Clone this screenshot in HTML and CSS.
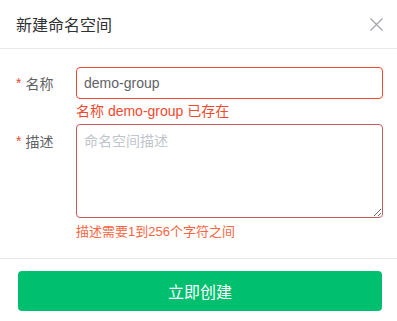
FILE: index.html
```html
<!DOCTYPE html>
<html lang="zh-CN">
<head>
    <meta charset="UTF-8">
    <title>新建命名空间</title>
    <link rel="stylesheet" href="styles.css">
</head>
<body>

<div class="dialog">
    <div class="dialog-header">
        <span class="dialog-title">新建命名空间</span>
        <button class="close-btn" aria-label="关闭">
            <svg width="13" height="13" viewBox="0 0 13 13"><path d="M0.5 0.5L12.5 12.5M12.5 0.5L0.5 12.5" stroke="#a0a3a8" stroke-width="1.2" fill="none"/></svg>
        </button>
    </div>
    <form class="dialog-body">
        <div class="form-item">
            <label class="form-label"><span class="required">*</span>名称</label>
            <div class="form-control">
                <input type="text" class="input is-error" value="demo-group">
                <div class="form-error">名称 demo-group 已存在</div>
            </div>
        </div>
        <div class="form-item">
            <label class="form-label label-top"><span class="required">*</span>描述</label>
            <div class="form-control">
                <textarea class="textarea is-error" placeholder="命名空间描述"></textarea>
                <div class="form-error small">描述需要1到256个字符之间</div>
            </div>
        </div>
    </form>
    <div class="dialog-footer">
        <button class="submit-btn">立即创建</button>
    </div>
</div>

</body>
</html>
```

FILE: styles.css
```css
body {
    margin: 0;
    background: #fff;
    font-family: "Liberation Sans", "Noto Sans CJK SC", sans-serif;
    font-size: 14px;
    color: #606266;
}
.dialog {
    width: 397px;
    height: 321px;
    display: flex;
    flex-direction: column;
}
.dialog-header {
    height: 49px;
    padding: 0 14px 0 16px;
    border-bottom: 1px solid #e8e8e8;
    display: flex;
    align-items: center;
    justify-content: space-between;
    box-sizing: border-box;
}
.dialog-title {
    font-size: 16px;
    color: #303133;
}
.close-btn {
    border: none;
    background: none;
    padding: 0;
    width: 14px;
    height: 14px;
    cursor: pointer;
    display: flex;
    align-items: center;
    justify-content: center;
}
.dialog-body {
    padding: 18px 14px 0 16px;
    height: 210px;
    box-sizing: border-box;
    border-bottom: 1px solid #e8e8e8;
    margin: 0;
}
.form-item {
    display: flex;
}
.form-label {
    width: 60px;
    display: flex;
    align-items: center;
    height: 32px;
    color: #606266;
}
.label-top {
    height: 34px;
}
.required {
    color: #f04a2e;
    margin-right: 4px;
    font-size: 14px;
}
.form-control {
    flex: 1;
}
.input,
.textarea {
    display: block;
    width: 100%;
    box-sizing: border-box;
    border: 1px solid #f04a2e;
    border-radius: 4px;
    font-family: "Liberation Sans", "Noto Sans CJK SC", sans-serif;
    font-size: 14px;
    color: #606266;
    outline: none;
}
.input {
    height: 32px;
    padding: 0 7px;
}
.textarea {
    height: 94px;
    padding: 5px 7px;
    border-color: #c45c5e;
    resize: vertical;
}
.textarea::placeholder {
    color: #c0c4cc;
}
.form-error {
    color: #f04a2e;
    font-size: 14px;
    line-height: 18px;
    padding: 3px 0 4px;
}
.form-error.small {
    font-size: 13px;
    color: #f8653f;
    padding: 5px 0 0;
}
.dialog-footer {
    padding: 12px 15px 10px 18px;
}
.submit-btn {
    width: 100%;
    height: 40px;
    border: none;
    border-radius: 4px;
    background: #00c06f;
    color: #fff;
    font-family: "Liberation Sans", "Noto Sans CJK SC", sans-serif;
    font-size: 16px;
    cursor: pointer;
}
```
